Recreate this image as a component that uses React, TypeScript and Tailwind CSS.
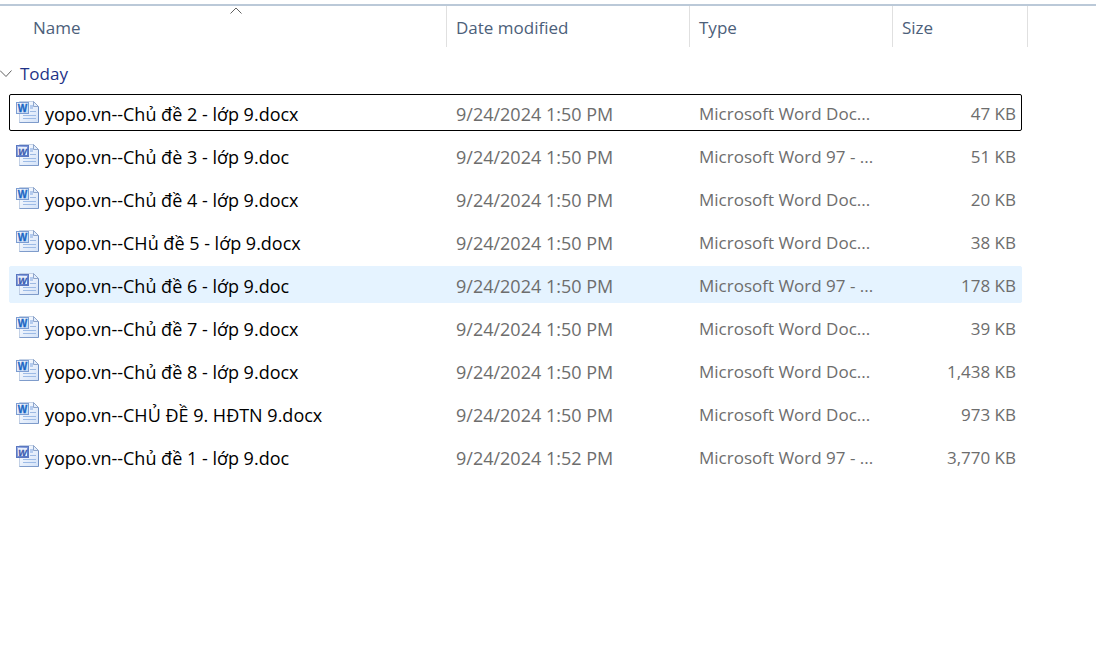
type FileKind = "docx" | "doc";

interface FileRow {
  name: string;
  modified: string;
  kind: FileKind;
  size: string;
  state?: "focused" | "hovered";
}

const files: FileRow[] = [
  { name: "yopo.vn--Chủ đề 2 - lớp 9.docx", modified: "9/24/2024 1:50 PM", kind: "docx", size: "47 KB", state: "focused" },
  { name: "yopo.vn--Chủ đè 3 - lớp 9.doc", modified: "9/24/2024 1:50 PM", kind: "doc", size: "51 KB" },
  { name: "yopo.vn--Chủ đề 4 - lớp 9.docx", modified: "9/24/2024 1:50 PM", kind: "docx", size: "20 KB" },
  { name: "yopo.vn--CHủ đề 5 - lớp 9.docx", modified: "9/24/2024 1:50 PM", kind: "docx", size: "38 KB" },
  { name: "yopo.vn--Chủ đề 6 - lớp 9.doc", modified: "9/24/2024 1:50 PM", kind: "doc", size: "178 KB", state: "hovered" },
  { name: "yopo.vn--Chủ đề 7 - lớp 9.docx", modified: "9/24/2024 1:50 PM", kind: "docx", size: "39 KB" },
  { name: "yopo.vn--Chủ đề 8 - lớp 9.docx", modified: "9/24/2024 1:50 PM", kind: "docx", size: "1,438 KB" },
  { name: "yopo.vn--CHỦ ĐỀ 9. HĐTN 9.docx", modified: "9/24/2024 1:50 PM", kind: "docx", size: "973 KB" },
  { name: "yopo.vn--Chủ đề 1 - lớp 9.doc", modified: "9/24/2024 1:52 PM", kind: "doc", size: "3,770 KB" },
];

const typeLabels: Record<FileKind, string> = {
  docx: "Microsoft Word Doc...",
  doc: "Microsoft Word 97 - ...",
};

const rowStyles = {
  focused: "border-black",
  hovered: "border-[#e5f3ff] bg-[#e5f3ff]",
  plain: "border-transparent",
};

function WordIcon({ kind }: { kind: FileKind }) {
  const legacy = kind === "doc";
  return (
    <svg className="size-6 shrink-0" viewBox="0 0 24 24" aria-hidden="true">
      <defs>
        <linearGradient id={`page-${kind}`} x1="0" y1="0" x2="1" y2="1">
          <stop offset="0" stopColor="#ffffff" />
          <stop offset="1" stopColor="#d3e2f8" />
        </linearGradient>
        <linearGradient id={`badge-${kind}`} x1="0" y1="0" x2="1" y2="1">
          <stop offset="0" stopColor={legacy ? "#a3b8ea" : "#ffffff"} />
          <stop offset="1" stopColor={legacy ? "#4f70c2" : "#bcd4f3"} />
        </linearGradient>
      </defs>
      <path d="M3.500 1.500h14l5 5v16h-19z" fill={`url(#page-${kind})`} stroke="#c3d1e6" />
      <path d="M22.500 6.500v16" fill="none" stroke="#6f8fc2" />
      <path d="M3.500 22.500h19" fill="none" stroke="#7f9ccb" />
      <path d="M17.500 1.500v5h5z" fill="#e4eefb" stroke="#8fa6cc" />
      <rect x="14" y="5" width="3" height="4" fill="#b4cbee" />
      <path d="M14 11.500h6" stroke="#9db9e2" />
      <path d="M7 15.500h13M7 18.500h13" stroke="#9dbbe6" />
      <rect x="0.500" y="2.500" width="12" height="11" fill={`url(#badge-${kind})`} stroke={legacy ? "#5b77c0" : "#7c9dd2"} />
      {legacy && <rect x="2" y="4" width="9" height="8" fill="#e9effc" />}
      <text
        x="6.500"
        y="11.500"
        textAnchor="middle"
        fontFamily="Liberation Sans, sans-serif"
        fontWeight="bold"
        fontStyle={legacy ? "italic" : "normal"}
        fontSize={legacy ? 9 : 10}
        fill={legacy ? "#3c5bb0" : "#1a66c4"}
        stroke={legacy ? "#3c5bb0" : "#1a66c4"}
        strokeWidth="0.300"
      >
        W
      </text>
    </svg>
  );
}

const headCell = "border-r border-[#e0e0e0] font-normal";
const headButton = "flex h-full w-full items-center px-[9px] pt-0.5 text-left";

export default function App() {
  return (
    <main className="min-h-screen overflow-x-auto bg-white pt-1 font-['Open_Sans','Noto_Sans',sans-serif] text-[17px] leading-6">
      <div className="border-t-2 border-[#bbc9d8]">
        <table className="mr-[68px] grid grid-cols-[447fr_243fr_203fr_135fr] whitespace-nowrap">
          <thead className="contents">
            <tr className="col-span-full grid h-[41px] grid-cols-subgrid text-[#4c607a]">
              <th className={`${headCell} relative pl-6`} aria-sort="ascending">
                <button className={headButton}>Name</button>
                <svg className="absolute top-px left-[230px] h-2 w-3" viewBox="0 0 12 8" fill="none" stroke="#606060" aria-hidden="true">
                  <path d="M.5 6.5 6 1l5.500 5.500" />
                </svg>
              </th>
              <th className={headCell}>
                <button className={headButton}>Date modified</button>
              </th>
              <th className={headCell}>
                <button className={headButton}>Type</button>
              </th>
              <th className={headCell}>
                <button className={headButton}>Size</button>
              </th>
            </tr>
          </thead>
          <tbody className="contents">
            <tr className="col-span-full grid h-[47px] grid-cols-subgrid">
              <th className="col-span-full text-left font-normal" scope="rowgroup">
                <button className="flex h-full items-center gap-2 pt-1.5 text-[#1e3287]" aria-expanded="true">
                  <svg className="h-2 w-3" viewBox="0 0 12 8" fill="none" stroke="#606060" aria-hidden="true">
                    <path d="M0 .5l6 6 5.500-6" />
                  </svg>
                  Today
                </button>
              </th>
            </tr>
            {files.map((file) => (
              <tr
                key={file.name}
                className={`col-span-full mr-1.5 mb-1.5 ml-[9px] grid h-[37px] grid-cols-subgrid items-center rounded-xs border pt-[3px] text-[#6d6d6d] ${rowStyles[file.state ?? "plain"]}`}
              >
                <td className="flex items-center gap-[5px] pl-1.5 text-lg leading-6 text-black">
                  <span className="flex pb-1">
                    <WordIcon kind={file.kind} />
                  </span>
                  {file.name}
                </td>
                <td className="px-[9px] text-lg leading-6">{file.modified}</td>
                <td className="px-[9px]">{typeLabels[file.kind]}</td>
                <td className="pr-[5px] text-right">{file.size}</td>
              </tr>
            ))}
          </tbody>
        </table>
      </div>
    </main>
  );
}
